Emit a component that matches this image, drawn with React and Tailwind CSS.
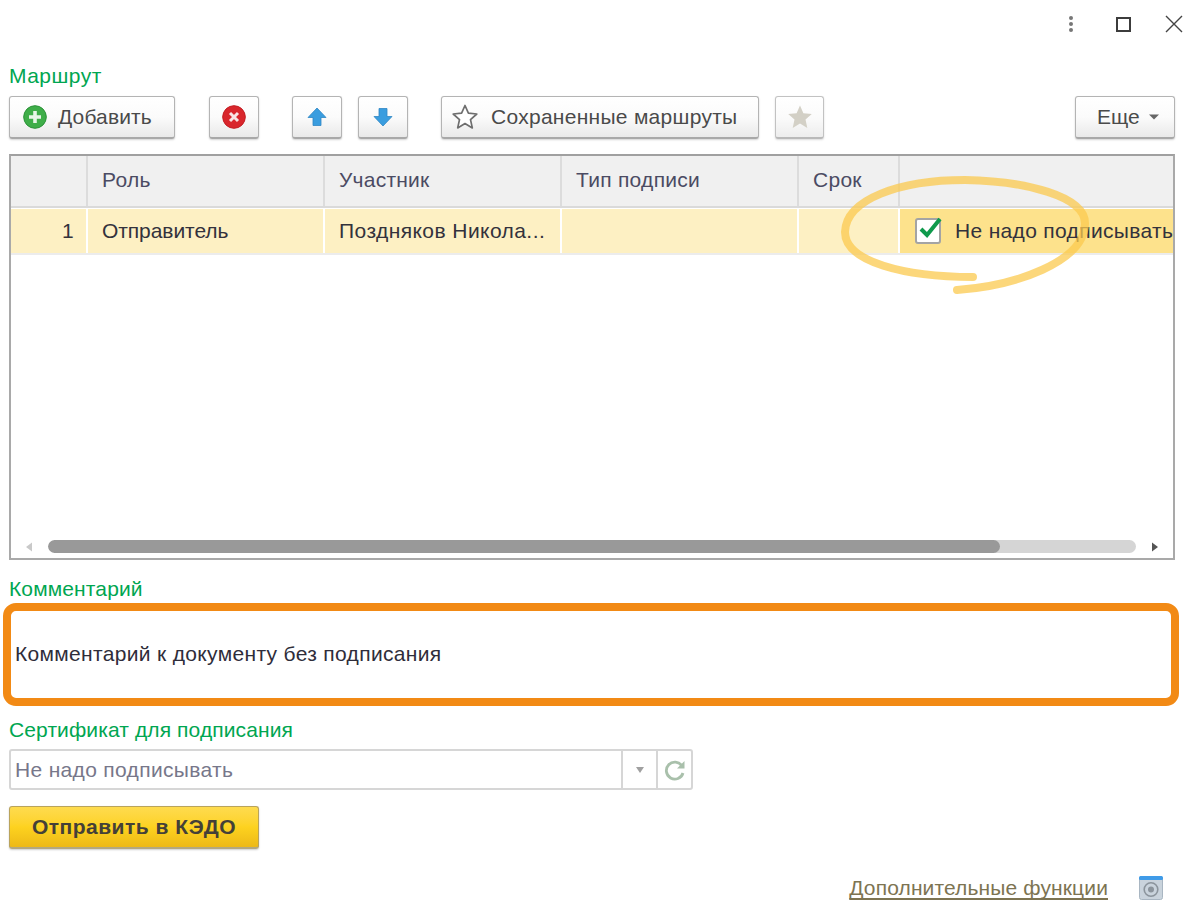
const font = { fontFamily: '"Liberation Sans", Arial, sans-serif' };

function Btn({ className = "", children }) {
  return (
    <div className={"h-[43px] flex items-center rounded-[3px] border border-[#b4b4b4] border-b-[2px] border-b-[#a8a8a8] bg-gradient-to-b from-white via-[#fbfbfb] to-[#e9e9e9] shadow-[0_1px_2px_rgba(0,0,0,0.18)] text-[#4a4a4a] " + className}>
      {children}
    </div>
  );
}

function Arrow({ down }) {
  return (
    <svg width="20" height="20" viewBox="0 0 20 20" className={down ? "rotate-180" : ""}>
      <path d="M10 1 L19 10.5 H14 V18.5 H6 V10.5 H1 Z" fill="#3a9ddf" stroke="#2f86c4" strokeWidth="0.8" />
    </svg>
  );
}

function Star({ filled }) {
  const d = "M13 1.5 L16.4 9.2 L24.8 10 L18.5 15.6 L20.3 23.9 L13 19.6 L5.7 23.9 L7.5 15.6 L1.2 10 L9.6 9.2 Z";
  return (
    <svg width="26" height="26" viewBox="0 0 26 26">
      {filled ? <path d={d} fill="#c9c5b8" /> : <path d={d} fill="#fff" stroke="#6e6e6e" strokeWidth="1.7" strokeLinejoin="round" />}
    </svg>
  );
}

function Th({ w, children, last, className = "" }) {
  return (
    <div className={"h-full flex items-center bg-[#f0f0f0] pl-[14px] pb-[3px] text-[#4b4b63] " + (last ? "flex-1 " : "border-r-2 border-r-[#dcdcdc] ") + className} style={w ? { width: w } : undefined}>
      {children}
    </div>
  );
}

function Td({ w, children, className = "" }) {
  return (
    <div className={"h-full flex items-center bg-[#fdf0c3] border-r-2 border-r-white text-[#33323c] " + className} style={{ width: w }}>
      {children}
    </div>
  );
}

export default function App() {
  return (
    <div style={font} className="relative w-[1200px] h-[924px] bg-white overflow-hidden text-[21px] tracking-[0.33px] pl-[9px] pr-[25px]">
      {/* window controls */}
      <div className="h-[48px] flex items-center justify-end -mr-[8px]">
        <svg width="6" height="18" viewBox="0 0 6 18">
          <circle cx="3" cy="3" r="2" fill="#777" /><circle cx="3" cy="9" r="2" fill="#777" /><circle cx="3" cy="15" r="2" fill="#777" />
        </svg>
        <div className="ml-[42px] w-[15px] h-[15px] border-2 border-[#3c3c3c]" />
        <svg width="18" height="18" viewBox="0 0 18 18" className="ml-[34px]">
          <path d="M1 1 L17 17 M17 1 L1 17" stroke="#444" strokeWidth="1.4" />
        </svg>
      </div>

      <div className="mt-[16px] h-[24px] leading-[24px] text-[#00a651] tracking-[0.48px]">Маршрут</div>

      {/* toolbar */}
      <div className="mt-[8px] flex items-start h-[43px]">
        <Btn className="w-[166px] pl-[13px] gap-[11px] tracking-[0.13px]">
          <svg width="24" height="24" viewBox="0 0 24 24">
            <circle cx="12" cy="12" r="11.3" fill="#3fae49" stroke="#2b9238" strokeWidth="1" />
            <path d="M12 6 V18 M6 12 H18" stroke="#e8f6e8" strokeWidth="3.6" />
          </svg>
          <span>Добавить</span>
        </Btn>
        <Btn className="ml-[34px] w-[50px] justify-center">
          <svg width="24" height="24" viewBox="0 0 24 24">
            <circle cx="12" cy="12" r="11.3" fill="#d9262c" stroke="#c21d22" strokeWidth="1" />
            <path d="M8 8 L16 16 M16 8 L8 16" stroke="#f8e4e4" strokeWidth="3" />
          </svg>
        </Btn>
        <Btn className="ml-[33px] w-[50px] justify-center"><Arrow /></Btn>
        <Btn className="ml-[16px] w-[50px] justify-center"><Arrow down /></Btn>
        <Btn className="ml-[33px] w-[318px] pl-[10px] gap-[13px] tracking-[0.28px]">
          <Star />
          <span>Сохраненные маршруты</span>
        </Btn>
        <Btn className="ml-[16px] w-[49px] justify-center opacity-80"><Star filled /></Btn>
        <Btn className="ml-auto w-[100px] pl-[21px] gap-[9px] tracking-[0.03px]">
          <span>Еще</span>
          <svg width="10" height="6" viewBox="0 0 10 6"><path d="M0 0.5 H10 L5 5.5 Z" fill="#666" /></svg>
        </Btn>
      </div>

      {/* table */}
      <div className="mt-[15px] h-[406px] border-2 border-[#a9a9a9] border-t-[#a0a0a0] flex flex-col overflow-hidden">
        <div className="h-[50px] flex shrink-0">
          <Th w={77} />
          <Th w={237}>Роль</Th>
          <Th w={237} className="tracking-[0.23px]">Участник</Th>
          <Th w={237} className="tracking-[0.28px]">Тип подписи</Th>
          <Th w={101} className="tracking-[0.28px]">Срок</Th>
          <Th last />
        </div>
        <div className="h-[2px] bg-[#dadada]" />
        <div className="h-[44px] mt-[1px] flex shrink-0 border-b-0">
          <Td w={77} className="justify-end pr-[12px]">1</Td>
          <Td w={237} className="pl-[14px] tracking-[-0.07px]">Отправитель</Td>
          <Td w={237} className="pl-[14px] tracking-[0.43px]">Поздняков Никола...</Td>
          <Td w={237} />
          <Td w={101} />
          <div className="flex-1 h-full bg-[#fde28c] flex items-center pl-[15px] gap-[14px] text-[#33323c] whitespace-nowrap overflow-hidden">
            <div className="relative shrink-0 w-[26px] h-[26px] rounded-[3px] border-2 border-[#a4a4a4] bg-white">
              <svg width="30" height="30" viewBox="0 0 30 30" className="absolute -top-[6px] -left-[1px]">
                <path d="M5 15 L11 21 L24 5" fill="none" stroke="#0f9a4c" strokeWidth="4" />
              </svg>
            </div>
            <span>Не надо подписывать</span>
          </div>
        </div>
        <div className="h-[2px] bg-[#ececec]" />
        <div className="flex-1" />
        {/* scrollbar */}
        <div className="h-[13px] mb-[5px] flex items-center pl-[14px] pr-[14px]">
          <svg width="8" height="10" viewBox="0 0 8 10"><path d="M7 0.5 V9.5 L1 5 Z" fill="#c9c9c9" /></svg>
          <div className="flex-1 ml-[15px] mr-[15px] h-[13px] rounded-full bg-[#d5d5d5] overflow-hidden">
            <div className="h-full w-[952px] rounded-full bg-[#999999]" />
          </div>
          <svg width="8" height="10" viewBox="0 0 8 10"><path d="M1 0.5 V9.5 L7 5 Z" fill="#555" /></svg>
        </div>
      </div>

      <div className="mt-[17px] h-[24px] leading-[24px] text-[#00a651] tracking-[0.13px]">Комментарий</div>

      <div className="mt-[2px] -ml-[6px] -mr-[4px] h-[103px] rounded-[13px] border-[8px] border-[#f28a15] bg-white flex items-center pl-[4px] pb-[2px] text-[#2f2d3a]">
        Комментарий к документу без подписания
      </div>

      <div className="mt-[12px] h-[24px] leading-[24px] text-[#00a651] tracking-[0.11px]">Сертификат для подписания</div>

      <div className="mt-[7px] w-[684px] h-[41px] rounded-[3px] border-2 border-[#d6d6d6] flex items-center bg-white">
        <span className="flex-1 pl-[4px] text-[#77778a]">Не надо подписывать</span>
        <div className="w-[35px] h-full border-l-2 border-l-[#d6d6d6] flex items-center justify-center">
          <svg width="8" height="6" viewBox="0 0 8 6"><path d="M0 0 H8 L4 6 Z" fill="#a0a0a0" /></svg>
        </div>
        <div className="w-[35px] h-full border-l-2 border-l-[#d6d6d6] flex items-center justify-center">
          <svg width="22" height="24" viewBox="0 0 22 24">
            <path d="M18 8 A8.5 8.5 0 1 0 19 15" fill="none" stroke="#a9c0ab" strokeWidth="2.8" />
            <path d="M20.5 3 V10.5 H13 Z" fill="#a9c0ab" />
          </svg>
        </div>
      </div>

      <div className="mt-[16px] w-[250px] h-[43px] rounded-[3px] border border-[#b9a35c] border-b-[2px] border-b-[#b3a87f] bg-gradient-to-b from-[#fedb4e] via-[#fdd21f] to-[#edb917] shadow-[0_1px_2px_rgba(0,0,0,0.2)] flex items-center justify-center font-bold text-[#444038] tracking-[0.5px]">
        Отправить в КЭДО
      </div>

      {/* footer */}
      <div className="mt-[26px] mr-[12px] flex items-center justify-end gap-[31px] h-[26px]">
        <span className="text-[#7d7452] underline underline-offset-[3px] [text-decoration-skip-ink:none] tracking-[0.13px]">Дополнительные функции</span>
        <svg width="24" height="24" viewBox="0 0 24 24">
          <rect x="0.5" y="0.5" width="23" height="23" rx="2" fill="#c9d3dc" stroke="#a9b6c2" />
          <rect x="0" y="0" width="24" height="4" rx="1.5" fill="#3f9be8" />
          <circle cx="12" cy="13.5" r="6.8" fill="none" stroke="#8b949c" strokeWidth="1.6" />
          <circle cx="12" cy="13.5" r="3" fill="#8b949c" />
        </svg>
      </div>

      {/* hand-drawn highlight */}
      <svg className="absolute left-0 top-0 pointer-events-none" width="1200" height="924" viewBox="0 0 1200 924" fill="none">
        <path
          d="M957 290 C1015 286 1084 262 1085 224 C1086 196 1025 181 965 180 C900 180 846 199 845 232 C845 262 905 277 973 277"
          stroke="#fbc94f"
          strokeOpacity="0.75"
          strokeWidth="8"
          strokeLinecap="round"
        />
      </svg>
    </div>
  );
}
